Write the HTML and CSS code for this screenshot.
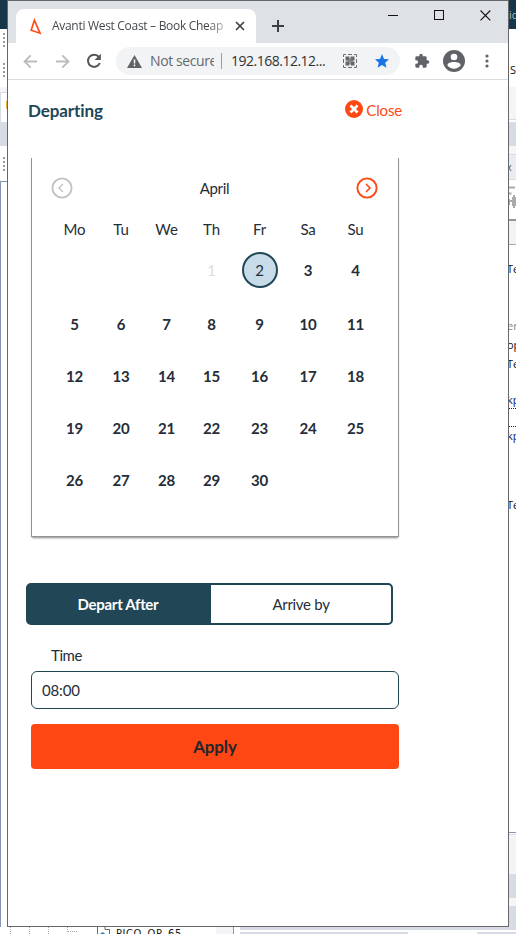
FILE: index.html
```
<!DOCTYPE html>
<html lang="en">
<head>
<meta charset="utf-8">
<title>Avanti West Coast – Book Cheap</title>
<link rel="stylesheet" href="styles.css">
</head>
<body>
<div class="desktop">
  <div class="edge edge-left">
    <div class="navy"></div>
    <div class="grip"><i class="dots"></i></div>
    <div class="grip grip-second"><i class="dots"></i></div>
    <div class="pale"></div>
    <div class="panel"><i class="tick"></i></div>
    <div class="slate"></div>
    <div class="grip grip-third"><i class="dots"></i></div>
    <div class="tree"></div>
  </div>

  <main class="window">
    <header class="tabstrip">
      <div class="tab">
        <svg class="logo" width="12" height="17" viewBox="0 0 12 17"><path d="M4.4 2.2 1.2 12.3 10 15.2Z" fill="none" stroke="#ff4b17" stroke-width="1.7"/></svg>
        <span class="tab-title">Avanti West Coast – Book Cheap</span>
        <svg width="10" height="10" viewBox="0 0 10 10"><path d="M1 1 9 9M9 1 1 9" stroke="#3c4043" stroke-width="1.7"/></svg>
      </div>
      <svg class="plus" width="12" height="12" viewBox="0 0 12 12"><path d="M6 0V12M0 6H12" stroke="#3c4043" stroke-width="2"/></svg>
      <div class="controls">
        <svg width="11" height="11" viewBox="0 0 11 11"><path d="M0 5.5H10" stroke="#111"/></svg>
        <svg width="11" height="11" viewBox="0 0 11 11"><rect x=".5" y=".5" width="9" height="9" fill="none" stroke="#111"/></svg>
        <svg width="11" height="11" viewBox="0 0 11 11"><path d="M.5.5 10.3 10.3M10.3.5.5 10.3" stroke="#111" stroke-width="1.1"/></svg>
      </div>
    </header>

    <nav class="toolbar">
      <svg class="arrow" width="15" height="15" viewBox="0 0 15 15"><path d="M14 7.5H2M7.7 1.3 1.5 7.5 7.7 13.7" fill="none" stroke="#b9bbbe" stroke-width="1.8"/></svg>
      <svg class="arrow" width="15" height="15" viewBox="0 0 15 15"><path d="M1 7.5H13M7.3 1.3 13.5 7.5 7.3 13.7" fill="none" stroke="#b9bbbe" stroke-width="1.8"/></svg>
      <svg class="reload" width="16" height="16" viewBox="0 0 16 16"><path d="M13 4.1A6.1 6.1 0 1 0 13.8 10" fill="none" stroke="#54575b" stroke-width="2"/><path d="M14.8.8V7H8.6Z" fill="#54575b"/></svg>
      <div class="address">
        <svg width="15" height="13" viewBox="0 0 15 13"><path d="M7.5 0 15 13H0Z" fill="#5f6368"/><path d="M7.5 4.4V8.4M7.5 9.6V11.2" stroke="#fff" stroke-width="1.5"/></svg>
        <span class="secure">Not secure</span>
        <i class="divider"></i>
        <span class="host">192.168.12.12...</span>
        <svg class="qr" width="14" height="14" viewBox="0 0 14 14"><path d="M.5 3V.5H3M11 .5H13.5V3M13.5 11V13.5H11M3 13.5H.5V11M5 .5H9M5 13.5H9M.5 5V9M13.5 5V9" fill="none" stroke="#6b6e72"/><path d="M2.5 2.5H6.4V6.4H2.5ZM7.6 2.5H11.5V6.4H7.6ZM2.5 7.6H6.4V11.5H2.5ZM7.6 7.6H11.5V11.5H7.6Z" fill="#63666a"/><path d="M4 6.900H10M7 4V10" stroke="#63666a"/></svg>
        <svg width="14" height="14" viewBox="0 0 14 14"><path d="M7 0 9 4.9 14 5.3 10.2 8.7 11.4 13.8 7 11.1 2.6 13.8 3.8 8.7 0 5.3 5 4.9Z" fill="#1a73e8"/></svg>
      </div>
      <svg class="puzzle" width="16" height="16" viewBox="0 0 24 24"><path d="M20.500 11H19V7a2 2 0 0 0-2-2h-4V3.500a2.500 2.500 0 0 0-5 0V5H4a2 2 0 0 0-2 2v3.800h1.500a2.700 2.700 0 0 1 0 5.400H2V20a2 2 0 0 0 2 2h3.800v-1.500a2.700 2.700 0 0 1 5.400 0V22H17a2 2 0 0 0 2-2v-4h1.500a2.500 2.500 0 0 0 0-5Z" fill="#5f6368"/></svg>
      <svg class="person" width="22" height="22" viewBox="0 0 22 22"><circle cx="11" cy="11" r="11" fill="#5f6368"/><circle cx="11" cy="7" r="3.300" fill="#fff"/><path d="M4.400 15.200C4.400 10.900 17.600 10.900 17.600 15.200A7.800 7.800 0 0 1 4.400 15.200Z" fill="#fff"/></svg>
      <svg class="more" width="4" height="14" viewBox="0 0 4 14"><g fill="#5f6368"><circle cx="2" cy="2" r="1.600"/><circle cx="2" cy="7" r="1.600"/><circle cx="2" cy="12" r="1.600"/></g></svg>
    </nav>

    <section class="page">
      <div class="heading">
        <h1>Departing</h1>
        <a class="close">
          <svg width="18" height="18" viewBox="0 0 18 18"><circle cx="9" cy="9" r="9" fill="#ff4713"/><path d="M5.500 5.500 12.500 12.500M12.500 5.500 5.500 12.500" stroke="#fff" stroke-width="2.600"/></svg>
          <span>Close</span>
        </a>
      </div>

      <div class="calendar">
        <div class="month">
          <svg width="22" height="22" viewBox="0 0 22 22" fill="none" stroke="#c3c3c3"><circle cx="11" cy="11" r="9.600" stroke-width="1.900"/><path d="M12 7 8 11 12 15" stroke-width="1.400"/></svg>
          <span>April</span>
          <svg width="22" height="22" viewBox="0 0 22 22" fill="none" stroke="#ff4713"><circle cx="11" cy="11" r="9.600" stroke-width="1.900"/><path d="M10 7 14 11 10 15" stroke-width="1.600"/></svg>
        </div>
        <div class="days">
          <span class="dow">Mo</span><span class="dow">Tu</span><span class="dow">We</span><span class="dow">Th</span><span class="dow">Fr</span><span class="dow">Sa</span><span class="dow">Su</span>
          <b></b><b></b><b></b><b class="past">1</b><b class="selected">2</b><b>3</b><b>4</b>
          <b>5</b><b>6</b><b>7</b><b>8</b><b>9</b><b>10</b><b>11</b>
          <b>12</b><b>13</b><b>14</b><b>15</b><b>16</b><b>17</b><b>18</b>
          <b>19</b><b>20</b><b>21</b><b>22</b><b>23</b><b>24</b><b>25</b>
          <b>26</b><b>27</b><b>28</b><b>29</b><b>30</b>
        </div>
      </div>

      <div class="toggle"><span class="on">Depart After</span><span>Arrive by</span></div>
      <div class="label">Time</div>
      <div class="field">08:00</div>
      <div class="apply">Apply</div>
    </section>
  </main>

  <div class="edge edge-right">
    <div class="r-title">ic</div>
    <div class="r-menu">S</div>
    <div class="r-tool"></div>
    <div class="r-band"></div>
    <div class="r-gap"></div>
    <div class="r-tab">x</div>
    <div class="r-icon"><svg width="8" height="23" viewBox="0 0 8 23"><path d="M0 1.500H6M0 7.500H2.500M0 13V19M5 9V22M1 15H8" stroke="#aaa" stroke-width="2" fill="none"/><path d="M3 11H7V20H3Z" fill="#aaa"/></svg></div>
    <div class="r-head"></div>
    <div class="code">
      <span class="c1">Te</span>
      <span class="c2 olive">er</span>
      <span class="c3">op</span>
      <span class="c4">Te</span>
      <span class="c5 blue">kp</span>
      <span class="c6 blue">kp</span>
      <span class="c7">Te</span>
    </div>
    <div class="r-pale"></div>
    <div class="r-slate"></div>
    <div class="r-split"></div>
    <div class="r-rest"></div>
  </div>

  <footer class="bottom">
    <div class="branches"><i></i><i></i><i></i><i class="elbow"></i></div>
    <svg class="file" width="15" height="7" viewBox="0 0 15 7"><path d="M.500 7V0M12.500 7V2.500H8V0" fill="none" stroke="#666"/><path d="M3 7Q6 3.500 8 7Z" fill="#2488ad"/></svg>
    <span class="filename">PICO_OP_65</span>
    <div class="scroll"></div>
    <div class="status"><i class="cells"></i><i class="blank"></i><i class="tail"></i></div>
  </footer>
</div>
</body>
</html>
```
FILE: styles.css
```
* { box-sizing: border-box; }
body { margin: 0; background: #fff; }
svg { display: block; flex: none; }
i { display: block; }

.desktop {
  width: 516px;
  height: 934px;
  overflow: hidden;
  display: grid;
  grid-template: 927px 7px / 7px 502px 7px;
}
.edge { overflow: hidden; display: flex; flex-direction: column; }
.edge > * { flex: none; }

/* left edge */
.navy { height: 29px; background: #16364a; }
.grip { height: 29px; padding: 4px 0 0 3px; }
.grip-second { padding-top: 5px; }
.grip-third { height: 35px; padding-top: 11px; }
.dots {
  width: 2px;
  height: 14px;
  background: repeating-linear-gradient(#999 0 2px, #fff 2px 4px);
}
.pale { height: 5px; background: #f5f5f7; }
.panel { height: 30px; border-top: 1px solid #d7dbe3; border-left: 1px solid #d7dbe3; padding-top: 8px; }
.tick { width: 1px; height: 8px; margin-left: 5px; background: #eeb13d; }
.slate { height: 24px; background: #d7dbe4; }
.tree { height: 746px; border-top: 1px solid #8795b0; border-left: 1px solid #8795b0; }

/* browser window */
.window {
  border: 1px solid #66676a;
  background: #fff;
  display: flex;
  flex-direction: column;
}
.tabstrip {
  height: 42px;
  background: #dee1e6;
  display: flex;
}
.tab {
  width: 240px;
  height: 34px;
  margin: 8px 0 0 8px;
  padding: 0 11px 0 14px;
  border-radius: 8px 8px 0 0;
  background: #fff;
  display: flex;
  align-items: center;
}
.tab-title {
  width: 174px;
  margin: 0 10px;
  overflow: hidden;
  white-space: nowrap;
  font: 12px/16px "Open Sans", sans-serif;
  letter-spacing: -.3px;
  color: #45494d;
  -webkit-mask-image: linear-gradient(90deg, #000 156px, rgba(0, 0, 0, .3) 174px);
  mask-image: linear-gradient(90deg, #000 156px, rgba(0, 0, 0, .3) 174px);
}
.plus { margin: 19px 0 0 16px; }
.controls { display: flex; gap: 35px; margin: 9px 0 0 104px; }

.toolbar {
  height: 37px;
  border-bottom: 1px solid #dadce0;
  display: flex;
  align-items: center;
}
.arrow { margin-left: 15px; }
.arrow + .arrow { margin-left: 17px; }
.reload { margin-left: 16px; }
.address {
  width: 284px;
  height: 28px;
  margin-left: 14px;
  padding-left: 11px;
  border-radius: 14px;
  background: #f1f3f4;
  display: flex;
  align-items: center;
  font: 14px/20px "Open Sans", sans-serif;
}
.secure { width: 64px; margin-left: 8px; overflow: hidden; white-space: nowrap; color: #65696e; letter-spacing: -.4px; }
.divider { width: 1px; height: 16px; margin: 0 9px 0 7px; background: #9a9da1; }
.host { width: 96px; color: #303236; letter-spacing: -.5px; white-space: nowrap; }
.qr { margin: 0 18px 0 16px; }
.puzzle { margin-left: 14px; }
.person { margin-left: 13px; }
.more { margin-left: 20px; }

/* journey form */
.page {
  flex: 1;
  padding: 18px 0 0 23px;
  font: 15px/20px Lato, sans-serif;
  letter-spacing: -.15px;
  color: #252d38;
}
.heading { width: 371px; height: 60px; display: flex; justify-content: space-between; }
h1 { margin: 2px 0 0 -3px; font-size: 17px; line-height: 22px; color: #214656; letter-spacing: -.1px; }
.close { height: 24px; display: flex; align-items: center; gap: 3px; color: #ff4713; }
.close svg { margin-top: -2px; }

.calendar {
  width: 368px;
  height: 379px;
  padding: 19px 20px 0;
  border: 1px solid #929292;
  border-top: 0;
  box-shadow: 0 2px 2px -1px #888;
}
.month { height: 21px; display: flex; justify-content: space-between; align-items: center; letter-spacing: -.3px; }
.month svg:first-child { margin-left: -1px; }
.days {
  display: grid;
  grid-template-columns: 45px 48px 43px 47px 49px 48px 47px;
  grid-template-rows: 43px 57px repeat(4, 52px);
  align-items: center;
  justify-items: center;
}
.dow { height: 43px; padding-top: 21px; }
.days .past { color: #ddd; font-weight: 400; }
.days .selected {
  width: 36px;
  height: 36px;
  border: 2px solid #214656;
  border-radius: 50%;
  background: #c8dbe9;
  line-height: 32px;
  text-align: center;
  font-weight: 400;
}

.toggle {
  width: 367px;
  height: 42px;
  margin: 46px 0 0 -5px;
  border: 2px solid #214656;
  border-radius: 5px;
  display: grid;
  grid-template-columns: 183px 1fr;
  line-height: 38px;
  text-align: center;
  letter-spacing: -.3px;
}
.toggle .on { padding-right: 3px; background: #214656; color: #fff; font-weight: 700; }
.label { margin: 20px 0 0 20px; letter-spacing: -.4px; }
.field { width: 368px; height: 38px; margin-top: 6px; padding-left: 10px; border: 1px solid #214656; border-radius: 6px; line-height: 36px; }
.apply {
  width: 368px;
  height: 45px;
  margin-top: 15px;
  border-radius: 4px;
  background: #ff4713;
  color: #24262b;
  font-size: 17px;
  font-weight: 700;
  line-height: 45px;
  text-align: center;
}

/* right edge */
.edge-right { font: 11px/14px "Open Sans", sans-serif; color: #111; }
.r-title { height: 29px; padding-top: 8px; background: #16364a; color: #b5bcc3; }
.r-menu { height: 58px; padding: 34px 0 0 1px; }
.r-tool { height: 33px; background: #f5f5f7; border-bottom: 1px solid #d7dbe3; }
.r-band { height: 26px; border-top: 2px solid #fff; background: #d7dbe4; }
.r-gap { height: 8px; background: #f6f6f8; }
.r-tab { height: 26px; padding-top: 5px; border: solid #d7dbe3; border-width: 1px 0; background: #e9ecf1; text-indent: -3px; color: #555; }
.r-icon { height: 35px; padding-top: 6px; }
.r-head { height: 26px; margin-top: 4px; border-top: 2px solid #9297a1; border-bottom: 1px solid #aaa; background: #f3f3f5; }
.code { height: 587px; display: flex; flex-direction: column; }
.code span { flex: none; height: 18px; line-height: 18px; text-indent: -2px; }
.c1 { margin-top: 15px; }
.c2 { margin-top: 39px; }
.c3 { margin-top: 1px; }
.c4 { margin-top: 1px; }
.c5 { margin-top: 18px; }
.c6 { margin-top: 17px; }
.c7 { margin-top: 52px; }
.olive { color: #858567; }
.blue { color: #10205c; }
.c5 { border-bottom: 1px dotted #222; }
.c6 { border-top: 1px dotted #222; }
.r-pale { height: 42px; border-top: 1px solid #8795b0; background: #f4f4f7; box-shadow: inset 0 1px #fff, inset 0 2px #d7dbe3; }
.r-slate { height: 24px; background: #d7dbe4; }
.r-split { height: 8px; background: #f6f6f8; }
.r-rest { height: 21px; background: #d7dbe4; }

/* bottom edge */
.bottom { grid-column: 1 / -1; height: 7px; overflow: hidden; display: flex; }
.branches { width: 97px; padding-left: 10px; display: flex; gap: 18px; }
.branches i { height: 7px; width: 1px; border-left: 1px dotted #aaa; }
.branches .elbow { width: 10px; height: 5px; border-bottom: 1px dotted #aaa; }
.filename { width: 104px; padding-left: 4px; font: 11px/14px "DejaVu Sans Condensed", "DejaVu Sans", sans-serif; letter-spacing: .6px; color: #171717; }
.scroll { width: 18px; background: #f3f4f7; border-right: 1px solid #8795b0; }
.status { flex: 1; margin-left: 6px; border-top: 3px solid #d7dbe4; display: flex; }
.status i { height: 2px; margin-top: 2px; background: #d7dbe4; }
.cells { width: 168px; }
.status .blank { width: 69px; background: #fff; }
.tail { flex: 1; }
```
